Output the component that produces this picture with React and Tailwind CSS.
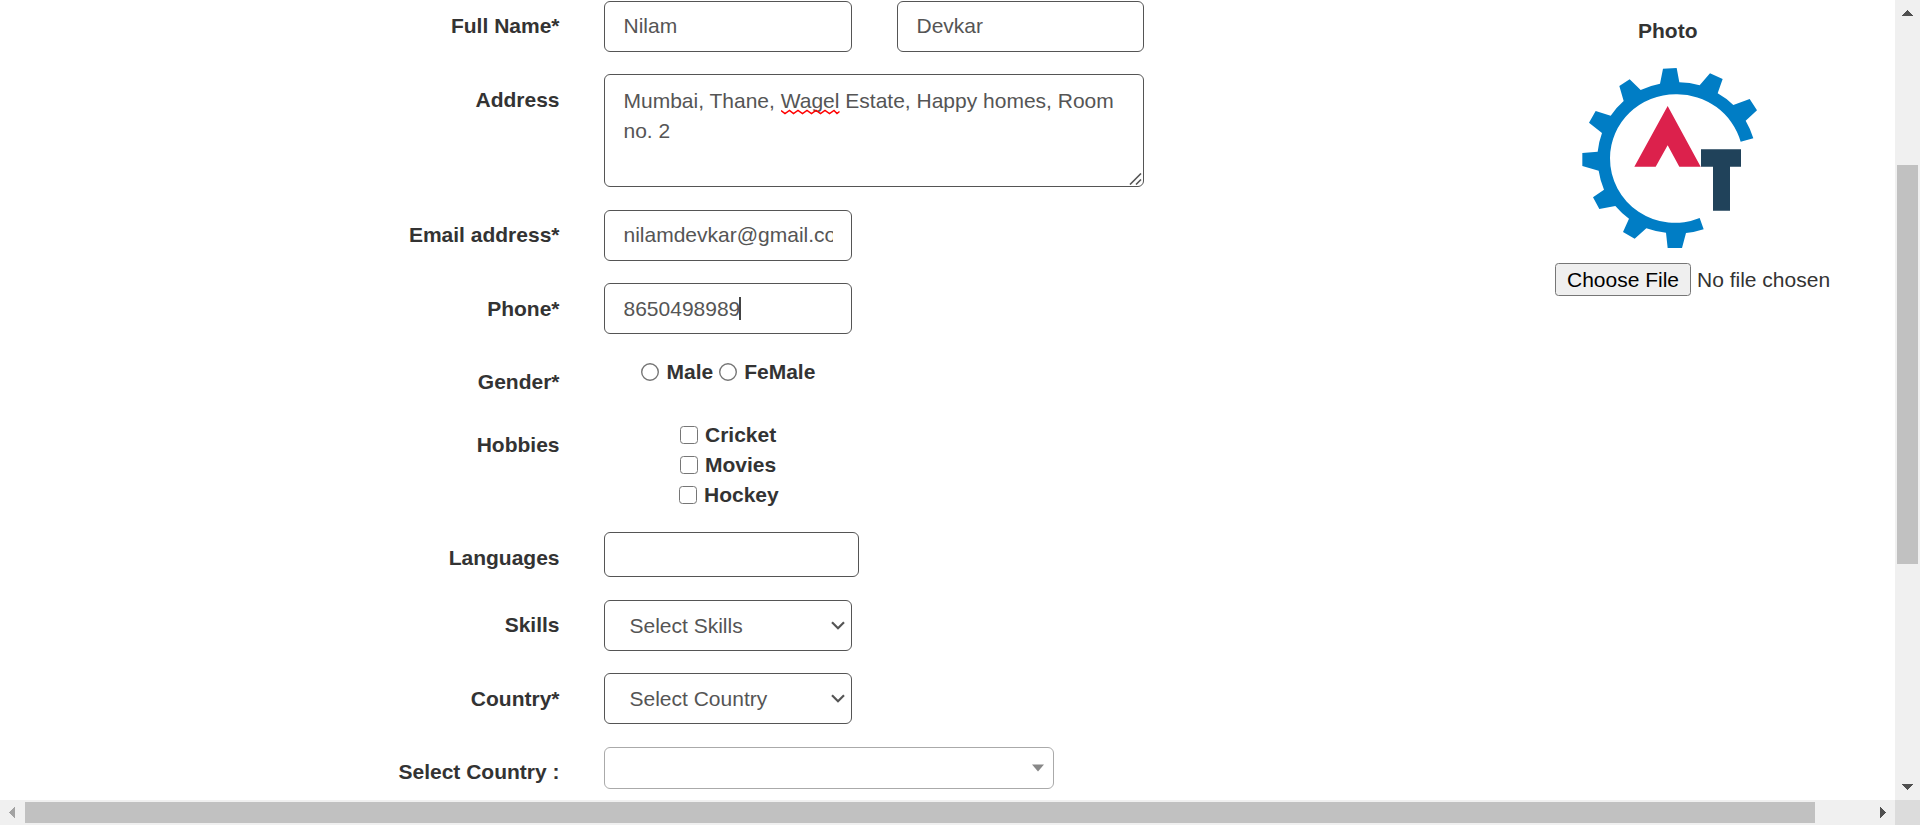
const box = 'rounded-[6px] border border-[#555] bg-white text-[#555]';

function Row({ label, className, labelPad = 'pt-[11px]', children }) {
  return (
    <div className={`flex items-start ${className}`}>
      <div className={`w-[559.5px] shrink-0 text-right font-bold whitespace-nowrap ${labelPad}`}>{label}</div>
      <div className="ml-[44.5px] flex">{children}</div>
    </div>
  );
}

function TextBox({ width = 'w-[248px]', pad = 'pb-px', children }) {
  return (
    <div className={`flex h-[51px] items-center pr-[18px] pl-[18.5px] ${width} ${pad} ${box}`}>
      <div className="flex w-full overflow-hidden whitespace-nowrap">{children}</div>
    </div>
  );
}

function SelectBox({ children }) {
  return (
    <div className={`flex h-[51px] w-[248px] items-center justify-between pr-[6px] pl-[24.5px] ${box}`}>
      <span>{children}</span>
      <svg className="-mt-px" width="14" height="9" viewBox="0 0 14 9" fill="none" stroke="#555" strokeWidth="2.2">
        <path d="M1 1.2L7 7.2L13 1.2" />
      </svg>
    </div>
  );
}

function Check({ label, className }) {
  return (
    <div className={`flex h-[30px] items-center ${className}`}>
      <span className="h-[18px] w-[18px] rounded-[3.5px] border-[1.5px] border-[#767676] bg-white" />
      <span className="ml-[7px]">{label}</span>
    </div>
  );
}

function Radio({ label, className }) {
  return (
    <div className={`flex h-[30px] items-center ${className}`}>
      <svg width="18" height="18" viewBox="0 0 18 18">
        <circle cx="9" cy="9" r="8.3" fill="#fff" stroke="#767676" strokeWidth="1.4" />
      </svg>
      <span className="ml-[7.5px]">{label}</span>
    </div>
  );
}

function Logo() {
  return (
    <svg className="mt-[14px] ml-[20px]" width="190" height="195" viewBox="105 180 570 585">
      <path
        fill="#007dc5"
        d="M602 425L640 415A234 234 0 0 0 617 362L651 331L629 297L580 315A232 232 0 0 0 533 280L548 237L510 220L479 256A230 230 0 0 0 418 247L410 204L369 206L360 251A230 230 0 0 0 302 270L269 238L238 258L251 303A232 232 0 0 0 212 347L167 333L147 368L186 399A234 234 0 0 0 173 455L127 459V498L176 512A234 234 0 0 0 192 569L159 592L178 627L226 618A232 232 0 0 0 267 656L249 696L284 716L319 685A230 230 0 0 0 378 698L383 744H426L438 699A230 230 0 0 0 491 688L479 654A195 193 0 0 1 210 474A197 192 0 0 1 408 283A198 196 0 0 1 602 425Z"
      />
      <path fill="#dc214c" d="M383 318L482 500H418L383 436L347 500H283Z" />
      <path fill="#20425a" d="M483 448H603V500H570V632H519V500H483Z" />
    </svg>
  );
}

function Arrow({ points, color, w, h }) {
  return (
    <svg width={w} height={h} viewBox={`0 0 ${w} ${h}`} shapeRendering="crispEdges">
      <polygon points={points} fill={color} />
    </svg>
  );
}

export default function App() {
  return (
    <div className="flex h-[825px] w-[1920px] flex-col overflow-hidden bg-white font-['Liberation_Sans',Arial,sans-serif] text-[21px] leading-[30px] text-[#333]">
      <div className="flex h-[800px]">
        <main className="flex w-[1895px] overflow-hidden">
          <form className="w-[1555px] shrink-0 pt-px">
            <Row label="Full Name*" className="h-[73px]" labelPad="pt-[10px]">
              <TextBox>Nilam</TextBox>
              <div className="ml-[45px]">
                <TextBox width="w-[247px]">Devkar</TextBox>
              </div>
            </Row>
            <Row label="Address" className="h-[136px]">
              <div className={`relative h-[113px] w-[540px] pt-[11px] pr-[18px] pl-[18.5px] ${box}`}>
                Mumbai, Thane,{' '}
                <span className="relative">
                  Wagel
                  <svg className="absolute top-[20px] left-0" width="59" height="6" viewBox="0 0 59 6" fill="none" stroke="#f00" strokeWidth="1.5">
                    <path d="M0 1.5L4 4.5L8.5 1.5L12.5 4.5L17 1.5L21.5 4.5L26 1.5L30.5 4.5L35 1.5L39.5 4.5L44 1.5L48.5 4.5L53 1.5L56 4.5L58.5 2.5" />
                  </svg>
                </span>{' '}
                Estate, Happy homes, Room no. 2
                <svg className="absolute right-[1.5px] bottom-[1px]" width="13" height="12" viewBox="0 0 13 12" stroke="#555" strokeWidth="1.6">
                  <path d="M1 11.5L12 0.5M7 11.5L12 6.5" />
                </svg>
              </div>
            </Row>
            <Row label="Email address*" className="h-[73px]" labelPad="pt-[10px]">
              <TextBox>nilamdevkar@gmail.com</TextBox>
            </Row>
            <Row label="Phone*" className="h-[73px]">
              <TextBox pad="pt-px">
                8650498989
                <span className="-ml-[1.5px] mt-[3px] h-[23px] w-[2px] bg-[#444]" />
              </TextBox>
            </Row>
            <Row label="Gender*" className="h-[63px]">
              <div className="flex pl-[37px] font-bold">
                <Radio label="Male" className="mt-px" />
                <Radio label="FeMale" className="mt-px ml-[5.5px]" />
              </div>
            </Row>
            <Row label="Hobbies" className="h-[113px]">
              <div className="font-bold">
                <Check label="Cricket" className="mt-px ml-[76px]" />
                <Check label="Movies" className="ml-[76px]" />
                <Check label="Hockey" className="ml-[75px]" />
              </div>
            </Row>
            <Row label="Languages" className="h-[68px]">
              <div className={`h-[45px] w-[255px] ${box}`} />
            </Row>
            <Row label="Skills" className="h-[73px]" labelPad="pt-[10px]">
              <SelectBox>Select Skills</SelectBox>
            </Row>
            <Row label="Country*" className="h-[73px]">
              <SelectBox>Select Country</SelectBox>
            </Row>
            <Row label="Select Country :" className="h-[54px]">
              <div className="mt-[1px] flex h-[42px] w-[450px] items-center justify-end rounded-[6px] border border-[#aaa] pr-[9px]">
                <svg width="12" height="8" viewBox="0 0 12 8">
                  <path d="M0 0.5H12L6 7.5Z" fill="#888" />
                </svg>
              </div>
            </Row>
          </form>
          <aside className="w-[340px] pt-[16px]">
            <div className="pl-[83px] font-bold">Photo</div>
            <Logo />
            <div className="mt-[8px] flex items-center whitespace-nowrap">
              <span className="flex h-[33px] w-[136px] items-center justify-center rounded-[3.5px] border border-[#767676] bg-[#efefef] text-black">
                Choose File
              </span>
              <span className="ml-[6px]">No file chosen</span>
            </div>
          </aside>
        </main>
        <div className="flex w-[25px] flex-col items-center bg-[#f0f0f0] pt-[10px] pb-[10px]">
          <Arrow w={11} h={6} points="0,6 5.5,0 11,6" color="#505050" />
          <div className="mt-[149px] h-[399px] w-[21px] bg-[#c1c1c1]" />
          <div className="mt-auto flex">
            <Arrow w={11} h={6} points="0,0 11,0 5.5,6" color="#505050" />
          </div>
        </div>
      </div>
      <div className="flex h-[25px]">
        <div className="flex w-[1895px] items-center bg-[#f0f0f0] pl-[9px]">
          <Arrow w={6} h={11} points="6,0 6,11 0,5.5" color="#a3a3a3" />
          <div className="mr-[65px] ml-[10px] h-[21px] w-[1790px] bg-[#c1c1c1]" />
          <Arrow w={6} h={11} points="0,0 6,5.5 0,11" color="#505050" />
        </div>
        <div className="w-[25px] bg-[#dcdcdc]" />
      </div>
    </div>
  );
}
